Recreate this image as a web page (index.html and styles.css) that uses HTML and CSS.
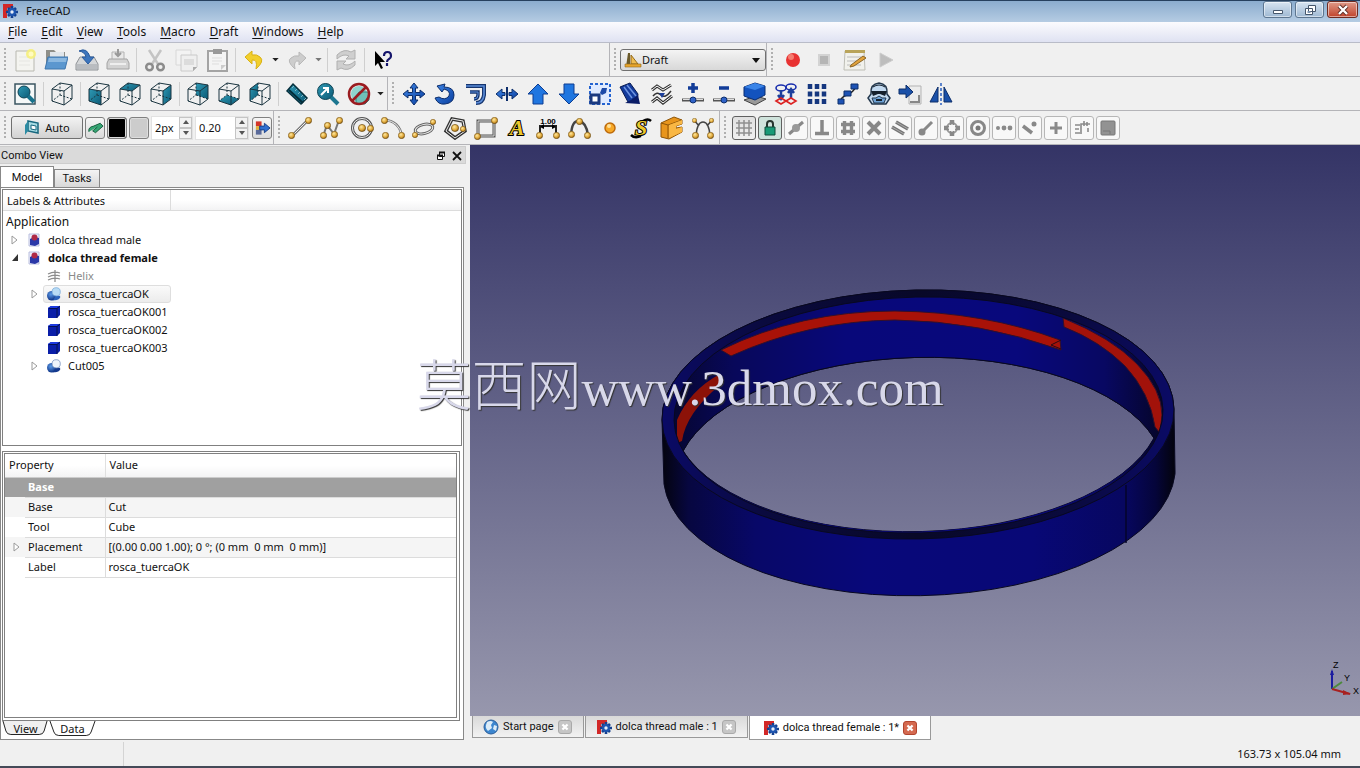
FILE: index.html
```html
<!DOCTYPE html>
<html lang="en">
<head>
<meta charset="utf-8">
<title>FreeCAD</title>
<link rel="stylesheet" href="styles.css">
</head>
<body>
<svg class="defs" aria-hidden="true">
  <defs>
    <linearGradient id="teal" x1="0" y1="0" x2="1" y2="1"><stop offset="0" stop-color="#2f9ab5"/><stop offset="1" stop-color="#0b5a76"/></linearGradient>
    <linearGradient id="blue" x1="0" y1="0" x2="1" y2="1"><stop offset="0" stop-color="#3f86e6"/><stop offset="1" stop-color="#0a3fa0"/></linearGradient>
    <radialGradient id="ball" cx=".4" cy=".35" r=".7"><stop offset="0" stop-color="#ffe9a0"/><stop offset=".6" stop-color="#e0a83a"/><stop offset="1" stop-color="#8a5c10"/></radialGradient>
    <radialGradient id="sphere" cx=".4" cy=".35" r=".7"><stop offset="0" stop-color="#5b9be8"/><stop offset="1" stop-color="#06287c"/></radialGradient>
    <symbol id="fc" viewBox="0 0 16 16"><path d="M1 1h10v4H5v2h4v3H5v5H1z" fill="#d22828"/><g transform="translate(10 9)"><g stroke="#14408f" stroke-width="2.6"><path d="M0-6V6M-6 0H6M-4-4 4 4M-4 4 4-4"/></g><circle r="3.9" fill="#1d55b0"/><circle r="1.7" fill="#e8eef8"/></g></symbol>
    <symbol id="wire" viewBox="0 0 24 24"><g fill="none" stroke="#1b3540" stroke-width="1"><path d="M2 7 14 9V23L2 19zM2 7 10 1 22 3 14 9M22 3V17L14 23"/><path d="M10 1V13L2 19M10 13 22 17" stroke-dasharray="2 1.5"/></g></symbol>
    <symbol id="b" viewBox="0 0 6 6"><circle cx="3" cy="3" r="2.7" fill="url(#ball)" stroke="#6b4a10" stroke-width=".5"/></symbol>
    <symbol id="doc" viewBox="0 0 14 14"><path d="M2 1h10v12H2z" fill="#eef0fa" stroke="#b9bede"/><path d="M3 6l4-2 5 1v6l-4 2-5-1z" fill="#2b38a8"/><circle cx="7.500" cy="4.500" r="3" fill="#b02a46"/></symbol>
    <symbol id="box" viewBox="0 0 14 14"><path d="M1 3 4 1h9v9l-3 3H1z" fill="#0a1ea8"/><path d="M1 3 4 1h9l-3 2z" fill="#1c3ae0"/><path d="M2 3.500h8V13M10 3.500 13 1" fill="none" stroke="#04104f"/></symbol>
    <symbol id="cut" viewBox="0 0 16 16"><circle cx="5.500" cy="10" r="5.500" fill="url(#sphere)"/><path d="M10 10h5v2q-2 4-8 3z" fill="#14398e"/><circle cx="10.500" cy="5.500" r="4.700" fill="#eef4fb" stroke="#6a87b8" stroke-width=".8"/></symbol>
    <symbol id="cutsel" viewBox="0 0 16 16"><circle cx="5.500" cy="10" r="5.500" fill="url(#sphere)"/><path d="M10 10h5v2q-2 4-8 3z" fill="#2c63bb"/><circle cx="10.500" cy="5.500" r="4.700" fill="#b9dcf5" stroke="#6fa5d8" stroke-width=".8"/></symbol>
    <symbol id="exp" viewBox="0 0 8 10"><path d="M1 1 6 5 1 9z" fill="#fff" stroke="#9a9a9a"/></symbol>
    <symbol id="x" viewBox="0 0 14 14"><path d="M4 4 10 10M10 4 4 10" stroke="#fff" stroke-width="2.600"/></symbol>
  </defs>
</svg>

<div class="window">
  <header class="titlebar">
    <svg class="i16"><use href="#fc"/></svg>
    <span class="title">FreeCAD</span>
    <div class="winbtns">
      <button class="winbtn" aria-label="Minimize"><svg viewBox="0 0 14 12"><path d="M2.500 6.500h9v3h-9z" fill="#fff" stroke="#45566b"/></svg></button>
      <button class="winbtn" aria-label="Restore"><svg viewBox="0 0 14 12"><path d="M5.500 1.500h7v6h-7zM2.500 4.500h7v6h-7z" fill="#fff" stroke="#45566b"/><path d="M4.500 7h3v2h-3z" fill="#7c93ae"/></svg></button>
      <button class="winbtn close" aria-label="Close"><svg viewBox="0 0 14 12"><path d="M3 2 11 10M11 2 3 10" stroke="#5b2a22" stroke-width="4"/><path d="M3 2 11 10M11 2 3 10" stroke="#fff" stroke-width="2.400"/></svg></button>
    </div>
  </header>

  <nav class="menubar">
    <button><u>F</u>ile</button><button><u>E</u>dit</button><button><u>V</u>iew</button><button><u>T</u>ools</button><button><u>M</u>acro</button><button><u>D</u>raft</button><button><u>W</u>indows</button><button><u>H</u>elp</button>
  </nav>

  <div class="row">
    <div class="bar grow">
      <i class="grip"></i>
      <button class="tb" aria-label="New"><svg viewBox="0 0 24 24"><path d="M3 3h18v20H3z" fill="#f4f4f0" stroke="#b8b8b0"/><path d="M6 9h10M6 13h11M6 17h11" stroke="#e6e6e2"/><circle cx="18" cy="6" r="5" fill="#f6f07a" opacity=".9"/><circle cx="18" cy="6" r="2.500" fill="#fffbc0"/></svg></button>
      <button class="tb" aria-label="Open"><svg viewBox="0 0 24 24"><path d="M2 2h8l2 2h9v16H2z" fill="#8e8e88"/><path d="M6 4h14v10H6z" fill="#dfe5ea"/><path d="M4 9h20l-3 12H1z" fill="#5b97cf" stroke="#3f76ad"/><path d="M5 10h18l-1 4H4z" fill="#8bb8e0"/></svg></button>
      <button class="tb" aria-label="Save"><svg viewBox="0 0 24 24"><path d="M5 9h14l4 7v6H1v-6z" fill="#d4d6d8" stroke="#8e9296"/><path d="M2 16h20v5H2z" fill="#b9bcc0"/><path d="M4 3q8-4 11 6h4l-6 7-6-7h4q-1-5-7-6z" fill="#3c75bd" stroke="#2a5a9c"/></svg></button>
      <button class="tb" aria-label="Print"><svg viewBox="0 0 24 24"><path d="M6 4h12v8H6z" fill="#e9e9e9" stroke="#b2b2b2"/><path d="M12 1v6m-3-2 3 3 3-3" stroke="#999" stroke-width="2" fill="none"/><path d="M3 11h18l2 4v6H1v-6z" fill="#d2d2d2" stroke="#a2a2a2"/><path d="M4 16h16" stroke="#eee" stroke-width="2"/></svg></button>
      <i class="sep"></i>
      <button class="tb" aria-label="Cut"><svg viewBox="0 0 24 24" fill="none"><path d="M6 2 15 16M18 2 9 16" stroke="#c4c4c4" stroke-width="2.500"/><circle cx="6.500" cy="19" r="3.300" stroke="#8c8c8c" stroke-width="2.500"/><circle cx="17.500" cy="19" r="3.300" stroke="#8c8c8c" stroke-width="2.500"/></svg></button>
      <button class="tb" aria-label="Copy"><svg viewBox="0 0 24 24"><path d="M2 2h15v15H2z" fill="#f3f3f3" stroke="#d8d8d8"/><path d="M7 7h16v12l-4 4H7z" fill="#efefef" stroke="#cacaca"/><path d="M10 11h10v6H10z" fill="#dcdcdc"/><path d="M19 23v-4h4z" fill="#aaa"/></svg></button>
      <button class="tb" aria-label="Paste"><svg viewBox="0 0 24 24"><path d="M3 3h19v20H3z" fill="#f4f4f4" stroke="#a4a4a4" stroke-width="2"/><path d="M8 1h9v5H8z" fill="#999"/><path d="M7 10h10M7 13h10M7 16h7" stroke="#ddd"/><path d="M16 22v-5h5z" fill="#ccc"/></svg></button>
      <i class="sep"></i>
      <button class="tb" aria-label="Undo"><svg viewBox="0 0 24 24"><path d="M10 3 3 9l7 7v-4q6-1 4 9 9-8 4-12-3-3-8-2z" fill="#f2cf2c" stroke="#d9b114"/></svg></button>
      <button class="dd" aria-label="Undo list"><svg viewBox="0 0 8 5"><path d="M0 0h8L4 4z" fill="#222"/></svg></button>
      <button class="tb" aria-label="Redo"><svg viewBox="0 0 24 24"><path d="M14 4 21 10l-7 7v-4q-6-1-4 8-9-8-4-11 3-3 8-2z" fill="#cdcdcd" stroke="#b8b8b8"/></svg></button>
      <button class="dd" aria-label="Redo list"><svg viewBox="0 0 8 5"><path d="M0 0h8L4 4z" fill="#777"/></svg></button>
      <i class="sep"></i>
      <button class="tb" aria-label="Refresh"><svg viewBox="0 0 24 24"><g fill="#cfcfcf" stroke="#b0b0b0"><path d="M3 11V7q7-7 14-3l4-2v9h-9l3-3Q9 5 3 11z"/><path d="M21 13v4q-7 7-14 3l-4 2v-9h9l-3 3q6 3 12-3z"/></g></svg></button>
      <i class="sep"></i>
      <button class="tb" aria-label="What's this"><svg viewBox="0 0 24 24"><path d="M4 3v15l3-3 3 6 2-1-3-6h5z" fill="#000"/><path d="M13 8q0-4 3.500-4T20 8q0 2-2 3t-2 3m0 1v3" fill="none" stroke="#15156b" stroke-width="2.200"/></svg></button>
    </div>
    <div class="bar combo-bar">
      <i class="grip"></i>
      <label class="combo"><svg viewBox="0 0 18 18" class="combo-ic"><path d="M4 2h2v14H2z" fill="#6b5a2a"/><path d="M7 4v9h7z" fill="#f0bd50" stroke="#946b1c"/><path d="M1 13h16v3H1z" fill="#e8a52c" stroke="#8d661c" stroke-width=".6"/></svg>
        <select aria-label="Workbench"><option>Draft</option></select>
        <svg viewBox="0 0 8 5" class="combo-arrow"><path d="M0 0h8L4 5z" fill="#111"/></svg></label>
    </div>
    <div class="bar last">
      <i class="grip"></i>
      <button class="tb" aria-label="Record"><svg viewBox="0 0 24 24"><circle cx="12" cy="12" r="7" fill="#e83232"/><circle cx="10" cy="9" r="3" fill="#f57c70"/></svg></button>
      <button class="tb" aria-label="Stop"><svg viewBox="0 0 24 24"><path d="M6 6h12v12H6z" fill="#d3d3d3"/><path d="M8 8h8v8H8z" fill="#b5b5b5"/></svg></button>
      <button class="tb" aria-label="Macros"><svg viewBox="0 0 24 24"><path d="M2 3h19l1 19H1z" fill="#f1f1ec" stroke="#bdbdb5"/><path d="M2 2h20v3H2z" fill="#b9a45a"/><path d="M4 9h14M4 13h14M4 17h14" stroke="#bbb"/><path d="M8 17 20 8l3 2-12 8-4 1z" fill="#e2a33c" stroke="#8a6424"/></svg></button>
      <button class="tb" aria-label="Run"><svg viewBox="0 0 24 24"><path d="M6 5 19 12 6 19z" fill="#bdbdbd" stroke="#ccc"/></svg></button>
    </div>
  </div>

  <div class="row">
    <div class="bar">
      <i class="grip"></i>
      <button class="tb" aria-label="Fit all"><svg viewBox="0 0 24 24"><path d="M2 2h20v20H2z" fill="#f5f8f8" stroke="#3b5661" stroke-width="1.500"/><circle cx="11" cy="10" r="6" fill="url(#teal)" stroke="#0c4253"/><path d="M15 14 21 20" stroke="#17728c" stroke-width="4"/></svg></button>
      <i class="sep"></i>
      <button class="tb" aria-label="Axonometric"><svg><use href="#wire"/></svg></button>
      <i class="sep"></i>
      <button class="tb" aria-label="Front"><svg viewBox="0 0 24 24"><path d="M2 7 14 9V23L2 19z" fill="url(#teal)"/><use href="#wire"/></svg></button>
      <button class="tb" aria-label="Top"><svg viewBox="0 0 24 24"><path d="M2 7 10 1 22 3 14 9z" fill="url(#teal)"/><use href="#wire"/></svg></button>
      <button class="tb" aria-label="Right"><svg viewBox="0 0 24 24"><path d="M14 9 22 3V17L14 23z" fill="url(#teal)"/><use href="#wire"/></svg></button>
      <i class="sep"></i>
      <button class="tb" aria-label="Rear"><svg viewBox="0 0 24 24"><path d="M10 1 22 3V17L10 13z" fill="url(#teal)"/><use href="#wire"/></svg></button>
      <button class="tb" aria-label="Bottom"><svg viewBox="0 0 24 24"><path d="M2 19 10 13 22 17 14 23z" fill="url(#teal)"/><use href="#wire"/></svg></button>
      <button class="tb" aria-label="Left"><svg viewBox="0 0 24 24"><path d="M2 7 10 1V13L2 19z" fill="url(#teal)"/><use href="#wire"/></svg></button>
      <i class="sep"></i>
      <button class="tb" aria-label="Measure"><svg viewBox="0 0 24 24"><path d="M8 2 22 16 16 22 2 9z" fill="url(#teal)" stroke="#06303d" stroke-width="1.500"/><path d="M4 8 18 21" stroke="#042c38" stroke-width="2"/><path d="M9 4 7 6m5 1-2 2m5 1-2 2m5 1-2 2m5 1-2 2" stroke="#7fb8c6"/></svg></button>
      <button class="tb" aria-label="Zoom"><svg viewBox="0 0 24 24"><circle cx="9.500" cy="9.500" r="8" fill="url(#teal)" stroke="#0c4253"/><path d="M15 15 22 22" stroke="#1c7690" stroke-width="4"/><path d="M5 13 12 6M7 6h5v5" stroke="#fff" stroke-width="2" fill="none"/></svg></button>
      <button class="tb" aria-label="Draw style"><svg viewBox="0 0 24 24"><circle cx="12" cy="12" r="8" fill="#8fd4ce"/><path d="M12 10h10v8l-4 4h-9v-8z" fill="#6fc0b8" stroke="#357e7b"/><circle cx="12" cy="12" r="10" fill="none" stroke="#9a1c20" stroke-width="2.500"/><path d="M5 19 19 5" stroke="#9a1c20" stroke-width="2.500"/></svg></button>
      <button class="dd" aria-label="Draw styles"><svg viewBox="0 0 8 5"><path d="M0 0h8L4 4z" fill="#222"/></svg></button>
    </div>
    <div class="bar last">
      <i class="grip"></i>
      <button class="tb" aria-label="Move"><svg viewBox="0 0 24 24"><path d="M12 1l4 5h-2.500v4.500H18V8l5 4-5 4v-2.500h-4.500V18H16l-4 5-4-5h2.500v-4.500H6V16l-5-4 5-4v2.500h4.500V6H8z" fill="url(#blue)" stroke="#0d2e6b"/></svg></button>
      <button class="tb" aria-label="Rotate"><svg viewBox="0 0 24 24"><path d="M12 2 4 4 9 10 11 7q7 2 5 7-4 5-10 1l-4 1q3 7 10 6 9-1 9-9Q21 5 11 5z" fill="url(#blue)" stroke="#0d2e6b"/></svg></button>
      <button class="tb" aria-label="Offset"><svg viewBox="0 0 24 24" fill="none"><path d="M2 4h18v9q-1 8-8 8" stroke="#16356f" stroke-width="4"/><path d="M2 4h18v9q-1 8-8 8" stroke="#5b8cd8" stroke-width="1.600"/><path d="M6 10h8v3q0 4-4 4" stroke="#16356f" stroke-width="3.400"/><path d="M6 10h8v3q0 4-4 4" stroke="#5b8cd8"/></svg></button>
      <button class="tb" aria-label="Trimex"><svg viewBox="0 0 24 24"><path d="M1 12l6-5v3.500h3v3H7V17zM23 12l-6-5v3.500h-3v3h3V17z" fill="url(#blue)" stroke="#0d2e6b"/><path d="M12 5v14" stroke="#0d2e6b" stroke-width="2"/></svg></button>
      <button class="tb" aria-label="Upgrade"><svg viewBox="0 0 24 24"><path d="M12 2 22 12h-5v10H7V12H2z" fill="#2076e0" stroke="#0d3d92"/></svg></button>
      <button class="tb" aria-label="Downgrade"><svg viewBox="0 0 24 24"><path d="M12 22 22 12h-5V2H7v10H2z" fill="#2076e0" stroke="#0d3d92"/></svg></button>
      <button class="tb" aria-label="Scale"><svg viewBox="0 0 24 24"><path d="M2 2h20v20H2z" fill="#dfeaff" stroke="#2463d0" stroke-width="2" stroke-dasharray="3 2"/><path d="M3 13h8v8H3z" fill="#fff" stroke="#1b3a80" stroke-width="3"/><path d="M12 11l2-5h5l-1 5-4 2z" fill="#1d4aa8"/></svg></button>
      <button class="tb" aria-label="Edit"><svg viewBox="0 0 24 24"><path d="M1 5 11 1l8 11-1 7-9 1z" fill="#123a9c" stroke="#081a50"/><path d="M5 5 13 16M8 3 17 14" stroke="#6d93e0" stroke-width="1.500"/><path d="M6 21l15 1-2-9-7 5z" fill="#0a1c66"/></svg></button>
      <button class="tb" aria-label="Wire to spline"><svg viewBox="0 0 24 24" fill="none"><path d="M2 8 7 4l6 4 8-5M2 20l5-4 6 5 9-7" stroke="#333" stroke-width="3"/><path d="M2 8 7 4l6 4 8-5M2 20l5-4 6 5 9-7" stroke="#fff"/><path d="M3 14q4-5 8-1t10-4" stroke="#333" stroke-width="1.500"/><path d="M9 11h6l-3 5z" fill="#1c3f9c"/></svg></button>
      <button class="tb" aria-label="Add point"><svg viewBox="0 0 24 24"><path d="M12 1v10M7 6h10" stroke="#123c98" stroke-width="3.500"/><path d="M1 18h22" stroke="#555" stroke-width="3"/><path d="M2 17.500h20" stroke="#ddd"/><circle cx="12" cy="18" r="3" fill="#2f62c8" stroke="#0d2e6b"/></svg></button>
      <button class="tb" aria-label="Remove point"><svg viewBox="0 0 24 24"><path d="M7 6h10" stroke="#123c98" stroke-width="3.500"/><path d="M1 18h22" stroke="#555" stroke-width="3"/><path d="M2 17.500h20" stroke="#ddd"/><circle cx="12" cy="18" r="3" fill="#2f62c8" stroke="#0d2e6b"/></svg></button>
      <button class="tb" aria-label="Shape 2D view"><svg viewBox="0 0 24 24"><path d="M1 18 13 14 23 17 12 23z" fill="#999" stroke="#444"/><path d="M1 5 12 1 22 4V13L12 18 1 14z" fill="#1353be" stroke="#0a2c70"/><path d="M1 5 12 1 22 4 12 8z" fill="#3a84e8"/></svg></button>
      <button class="tb" aria-label="Draft to sketch"><svg viewBox="0 0 24 24" fill="none"><g stroke="#1a2fae" stroke-width="1.600"><ellipse cx="7" cy="6" rx="5" ry="3"/><ellipse cx="17" cy="5" rx="5" ry="3"/></g><path d="M7 8v8M17 16V8M4 13l3 4 3-4M14 11l3-4 3 4" stroke="#1c3f9c" stroke-width="2.500"/><path d="M2 19l5-3 5 3 5-3 5 3-5 3-5-3-5 3z" stroke="#dc2222" stroke-width="1.600"/></svg></button>
      <button class="tb" aria-label="Array"><svg viewBox="0 0 24 24"><path d="M5 2v20M12 2v20M19 2v20" stroke="#15377f" stroke-width="4.500" stroke-dasharray="5 2.500"/></svg></button>
      <button class="tb" aria-label="Path array"><svg viewBox="0 0 24 24"><path d="M4 20q1-5 7-7t9-9" fill="none" stroke="#222" stroke-width="1.500"/><path d="M15 2h7v5h-7zM8 9h7v5H8zM2 17h6v5H2z" fill="#1d52b4" stroke="#0d2e6b"/></svg></button>
      <button class="tb" aria-label="Clone"><svg viewBox="0 0 24 24"><path d="M4 12q-1-10 8-11 9 1 8 11l3 4-4 6H5l-4-6z" fill="#c3daf0" stroke="#23374c" stroke-width="1.500"/><path d="M4 9h16l-2 5-5-2h-2l-5 2z" fill="#15202c"/><path d="M6 5q6-4 12 0" stroke="#15202c" fill="none"/><path d="M5 16h4l3-2 3 2h4l-2 5H7z" fill="#6fa3d6" stroke="#23374c"/><path d="M9 18h6" stroke="#15202c" stroke-width="2"/></svg></button>
      <button class="tb" aria-label="Drawing"><svg viewBox="0 0 24 24"><path d="M11 4h12v18H11z" fill="#ececec" stroke="#b3b3b3"/><path d="M12 20h9v-7" fill="none" stroke="#888" stroke-width="2"/><path d="M1 7h7V3l7 7-7 6v-4H1z" fill="#1a50a8" stroke="#0d2e6b"/></svg></button>
      <button class="tb" aria-label="Mirror"><svg viewBox="0 0 24 24"><path d="M9 5V20H1zM15 5V20h8z" fill="#1a50a8" stroke="#0d2e6b"/><path d="M12 1v22" stroke="#2a5fc0" stroke-width="1.500" stroke-dasharray="3 2"/></svg></button>
    </div>
  </div>

  <div class="row">
    <div class="bar style-bar">
      <i class="grip"></i>
      <button class="auto"><svg viewBox="0 0 16 16"><path d="M4 1 14 3V13L4 11z" fill="#a7dbe3" stroke="#17677e" stroke-width="1.500"/><path d="M4 1 1 5v10l3-4z" fill="#2c8ca4"/><path d="M7 5l5 1v4L7 9z" fill="#fff" stroke="#17677e"/></svg>Auto</button>
      <button class="sq" aria-label="Construction"><svg viewBox="0 0 18 16"><path d="M2 12q-1-5 5-6l7-3 3 3-8 7-3-2 5-4" fill="#35a573" stroke="#145a3b"/></svg></button>
      <button class="sq line" aria-label="Line color"></button>
      <button class="sq face" aria-label="Face color"></button>
      <div class="spin w1"><input aria-label="Line width" value="2px"><div><button aria-label="Wider"><svg viewBox="0 0 6 4"><path d="M0 4h6L3 0z"/></svg></button><button aria-label="Thinner"><svg viewBox="0 0 6 4"><path d="M0 0h6L3 4z"/></svg></button></div></div>
      <div class="spin w2"><input aria-label="Text size" value="0.20"><div><button aria-label="Larger"><svg viewBox="0 0 6 4"><path d="M0 4h6L3 0z"/></svg></button><button aria-label="Smaller"><svg viewBox="0 0 6 4"><path d="M0 0h6L3 4z"/></svg></button></div></div>
      <button class="sq" aria-label="Apply"><svg viewBox="0 0 18 16"><path d="M2 1h6v5H2z" fill="#d3352a"/><path d="M2 6h6v4H2z" fill="#e2b13a"/><path d="M2 10h6v5H2z" fill="#5a6a9a"/><path d="M6 6h5V3l6 5-6 5v-3H6z" fill="#2f6fd0" stroke="#173f88"/></svg></button>
    </div>
    <div class="bar">
      <i class="grip"></i>
      <button class="tb" aria-label="Line"><svg viewBox="0 0 24 24"><path d="M4 20 20 4" stroke="#777" stroke-width="3"/><path d="M4 20 20 4" stroke="#eee"/><use href="#b" x="0" y="16" width="7" height="7"/><use href="#b" x="17" y="1" width="7" height="7"/></svg></button>
      <button class="tb" aria-label="Wire"><svg viewBox="0 0 24 24"><path d="M4 20 8 9l7 9 5-14" fill="none" stroke="#777" stroke-width="2"/><use href="#b" x="1" y="16" width="7" height="7"/><use href="#b" x="5" y="6" width="7" height="7"/><use href="#b" x="12" y="15" width="7" height="7"/><use href="#b" x="17" y="1" width="7" height="7"/></svg></button>
      <button class="tb" aria-label="Circle"><svg viewBox="0 0 24 24"><circle cx="12" cy="12" r="9.500" fill="none" stroke="#555" stroke-width="3"/><circle cx="12" cy="12" r="9.500" fill="none" stroke="#eee"/><use href="#b" x="8" y="8" width="8" height="8"/><use href="#b" x="17" y="9" width="7" height="7"/></svg></button>
      <button class="tb" aria-label="Arc"><svg viewBox="0 0 24 24"><path d="M4 4q14 1 17 16" fill="none" stroke="#777" stroke-width="2.500"/><path d="M4 4q14 1 17 16" fill="none" stroke="#eee"/><use href="#b" x="0" y="1" width="7" height="7"/><use href="#b" x="1" y="16" width="7" height="7"/><use href="#b" x="17" y="16" width="7" height="7"/></svg></button>
      <button class="tb" aria-label="Ellipse"><svg viewBox="0 0 24 24"><ellipse cx="12" cy="13" rx="9" ry="4.500" transform="rotate(-14 12 13)" fill="none" stroke="#666" stroke-width="3"/><ellipse cx="12" cy="13" rx="9" ry="4.500" transform="rotate(-14 12 13)" fill="none" stroke="#eee"/><use href="#b" x="0" y="16" width="6" height="6"/><use href="#b" x="18" y="3" width="6" height="6"/></svg></button>
      <button class="tb" aria-label="Polygon"><svg viewBox="0 0 24 24"><path d="M9 3 20 5l2 10-10 7-9-7z" fill="none" stroke="#333" stroke-width="3.500"/><path d="M9 3 20 5l2 10-10 7-9-7z" fill="none" stroke="#eee"/><use href="#b" x="8" y="8" width="8" height="8"/><use href="#b" x="17" y="10" width="6" height="6"/></svg></button>
      <button class="tb" aria-label="Rectangle"><svg viewBox="0 0 24 24"><path d="M4 5h16v15H4z" fill="#f2f2f2" stroke="#555" stroke-width="3"/><path d="M4 5h16v15H4z" fill="none" stroke="#ddd"/><use href="#b" x="0" y="17" width="7" height="7"/><use href="#b" x="17" y="1" width="7" height="7"/></svg></button>
      <button class="tb" aria-label="Text"><svg viewBox="0 0 24 24"><text class="glyph" x="12" y="19">A</text></svg></button>
      <button class="tb" aria-label="Dimension"><svg viewBox="0 0 24 24"><text class="dim" x="12" y="8">1.00</text><path d="M4 20V10h16v10" fill="none" stroke="#222" stroke-width="2"/><path d="M4 11l4-3v5zM20 11l-4-3v5z"/><use href="#b" x="0" y="16" width="7" height="7"/><use href="#b" x="17" y="16" width="7" height="7"/></svg></button>
      <button class="tb" aria-label="BSpline"><svg viewBox="0 0 24 24"><path d="M4 19Q5 4 12 5t9 14" fill="none" stroke="#444" stroke-width="2.500"/><use href="#b" x="1" y="15" width="7" height="7"/><use href="#b" x="9" y="2" width="7" height="7"/><use href="#b" x="17" y="16" width="7" height="7"/></svg></button>
      <button class="tb" aria-label="Point"><svg viewBox="0 0 24 24"><circle cx="12" cy="12" r="5" fill="#f7a928" stroke="#bd6b0c" stroke-width="1.500"/><circle cx="11" cy="10" r="2" fill="#ffe097"/></svg></button>
      <button class="tb" aria-label="Shape string"><svg viewBox="0 0 24 24"><path d="M2 19q4 4 10 1M14 5q5-3 8 0" fill="none" stroke="#000" stroke-width="2.500"/><text class="glyph" x="12" y="19">S</text></svg></button>
      <button class="tb" aria-label="Facebinder"><svg viewBox="0 0 24 24"><path d="M1 7 14 1 22 4V8L16 10V12L22 11V16L9 23 1 21z" fill="#e8951c" stroke="#8d5508"/><path d="M1 7 8 9 22 4M8 9v13" fill="none" stroke="#8d5508"/><path d="M9 9 22 4v4l-6 2v3l6-2v5L9 22z" fill="#f9b744"/></svg></button>
      <button class="tb" aria-label="Bezier"><svg viewBox="0 0 24 24"><path d="M5 20Q6 6 12 6t7 14M3 4 8 10M21 4 16 10" fill="none" stroke="#444" stroke-width="1.500"/><use href="#b" x="1" y="2" width="5" height="5"/><use href="#b" x="18" y="2" width="5" height="5"/><use href="#b" x="1" y="16" width="7" height="7"/><use href="#b" x="16" y="16" width="7" height="7"/></svg></button>
    </div>
    <div class="bar last snaps">
      <i class="grip"></i>
      <button class="snap on" aria-label="Grid"><svg viewBox="0 0 18 18"><path d="M4 1v16M9 1v16M14 1v16M1 4h16M1 9h16M1 14h16" stroke="#909090" stroke-width="1.500"/></svg></button>
      <button class="snap on lock" aria-label="Lock"><svg viewBox="0 0 18 18"><path d="M6 8V5q0-3 3-3t3 3v3" fill="none" stroke="#26352f" stroke-width="2"/><path d="M4 8h10v8H4z" fill="#189a76" stroke="#0e4d3a"/></svg></button>
      <button class="snap" aria-label="Midpoint"><svg viewBox="0 0 18 18"><path d="M2 15 16 3" stroke="#888" stroke-width="3"/><circle cx="9" cy="9" r="4" fill="#999"/></svg></button>
      <button class="snap" aria-label="Perpendicular"><svg viewBox="0 0 18 18"><path d="M9 1v13M2 14.500h14" stroke="#888" stroke-width="3.500"/></svg></button>
      <button class="snap" aria-label="Grid snap"><svg viewBox="0 0 18 18"><path d="M5.500 2v14M12.500 2v14M2 5.500h14M2 12.500h14" stroke="#888" stroke-width="3.400" /></svg></button>
      <button class="snap" aria-label="Intersection"><svg viewBox="0 0 18 18"><path d="M3 3 15 15M15 3 3 15" stroke="#888" stroke-width="4"/></svg></button>
      <button class="snap" aria-label="Parallel"><svg viewBox="0 0 18 18"><path d="M5 3 17 10M1 8l12 7" stroke="#777" stroke-width="3.500"/><path d="M5 3 17 10M1 8l12 7" stroke="#aaa"/></svg></button>
      <button class="snap" aria-label="Endpoint"><svg viewBox="0 0 18 18"><path d="M5 13 15 3" stroke="#888" stroke-width="3"/><circle cx="5" cy="13" r="3.500" fill="#888"/></svg></button>
      <button class="snap" aria-label="Angle"><svg viewBox="0 0 18 18"><circle cx="9" cy="9" r="5" fill="none" stroke="#999" stroke-width="2"/><path d="M9 1v5M9 12v5M1 9h5M12 9h5" stroke="#888" stroke-width="4.500"/><path d="M9 5 13 9 9 13 5 9z" fill="#f5f5f5"/></svg></button>
      <button class="snap" aria-label="Center"><svg viewBox="0 0 18 18"><circle cx="9" cy="9" r="6.500" fill="none" stroke="#888" stroke-width="3"/><circle cx="9" cy="9" r="2.500" fill="#777"/></svg></button>
      <button class="snap" aria-label="Extension"><svg viewBox="0 0 18 18" fill="#8a8a8a"><circle cx="3" cy="9" r="2"/><circle cx="9" cy="9" r="2.400"/><circle cx="15" cy="9" r="2.400"/></svg></button>
      <button class="snap" aria-label="Near"><svg viewBox="0 0 18 18"><path d="M2 7 11 14" stroke="#888" stroke-width="3.500"/><circle cx="13" cy="5" r="2.500" fill="#888"/></svg></button>
      <button class="snap" aria-label="Ortho"><svg viewBox="0 0 18 18"><path d="M9 3v12M3 9h12" stroke="#8a8a8a" stroke-width="3"/></svg></button>
      <button class="snap" aria-label="Special"><svg viewBox="0 0 18 18"><path d="M2 6h5M2 10h4M2 14h5M8 15V5h9M11 2v5M14 3v4M15 9v4" stroke="#8a8a8a" stroke-width="1.600" fill="none"/></svg></button>
      <button class="snap" aria-label="Working plane"><svg viewBox="0 0 18 18"><rect x="2" y="2" width="14" height="14" rx="1" fill="#929292" stroke="#777"/><path d="M4 12h7v3" stroke="#777" fill="none"/></svg></button>
    </div>
  </div>

  <main class="main">
    <aside class="dock">
      <div class="docktitle"><span>Combo View</span>
        <button aria-label="Float"><svg viewBox="0 0 10 10"><path d="M3.500 1.500h5v4h-5zM1.500 4.500h5v4h-5z" fill="#fff" stroke="#111"/><path d="M3 1.500h6M1 4.500h6" stroke="#111" stroke-width="2"/></svg></button>
        <button aria-label="Close panel"><svg viewBox="0 0 10 10"><path d="M1 1 9 9M9 1 1 9" stroke="#111" stroke-width="1.800"/></svg></button>
      </div>
      <div class="tabs"><button class="tab active">Model</button><button class="tab">Tasks</button></div>
      <div class="pane">
        <section class="tree">
          <div class="treehead"><span>Labels &amp; Attributes</span></div>
          <ul>
            <li class="root">Application</li>
            <li><svg class="tw"><use href="#exp"/></svg><svg class="ic"><use href="#doc"/></svg>dolca thread male</li>
            <li class="bold"><svg class="tw" viewBox="0 0 8 10"><path d="M7 1v7H1z" fill="#333"/></svg><svg class="ic"><use href="#doc"/></svg>dolca thread female</li>
            <li class="sub dim-row"><i class="tw"></i><svg class="ic" viewBox="0 0 14 14"><path d="M1 5q6-3 12-1M1 8q6-3 12-1M1 11q6-3 12-1M8 1v12" fill="none" stroke="#8c8c8c" stroke-width="1.300"/></svg>Helix</li>
            <li class="sub"><svg class="tw"><use href="#exp"/></svg><span class="sel"><svg class="ic"><use href="#cutsel"/></svg>rosca_tuercaOK</span></li>
            <li class="sub"><i class="tw"></i><svg class="ic"><use href="#box"/></svg>rosca_tuercaOK001</li>
            <li class="sub"><i class="tw"></i><svg class="ic"><use href="#box"/></svg>rosca_tuercaOK002</li>
            <li class="sub"><i class="tw"></i><svg class="ic"><use href="#box"/></svg>rosca_tuercaOK003</li>
            <li class="sub"><svg class="tw"><use href="#exp"/></svg><svg class="ic"><use href="#cut"/></svg>Cut005</li>
          </ul>
        </section>
        <section class="props">
          <div class="propframe">
            <table>
              <colgroup><col class="c1"><col class="c2"><col></colgroup>
              <thead><tr><th colspan="2">Property</th><th>Value</th></tr></thead>
              <tbody>
                <tr class="group"><td class="g"></td><td colspan="2">Base</td></tr>
                <tr class="alt"><td class="g"></td><td>Base</td><td>Cut</td></tr>
                <tr><td class="g"></td><td>Tool</td><td>Cube</td></tr>
                <tr class="alt"><td class="g"><svg class="tw"><use href="#exp"/></svg></td><td>Placement</td><td>[(0.00 0.00 1.00); 0 °; (0 mm&nbsp; 0 mm&nbsp; 0 mm)]</td></tr>
                <tr><td class="g"></td><td>Label</td><td>rosca_tuercaOK</td></tr>
              </tbody>
            </table>
          </div>
        </section>
        <div class="btabs">
          <button class="btab"><svg viewBox="0 0 48 16" preserveAspectRatio="none"><path d="M1 0 4 10Q5 13.500 9 13.500H38Q42 13.500 43 10L46 0" fill="#f0f0f0" stroke="#222"/></svg><span>View</span></button>
          <button class="btab"><svg viewBox="0 0 48 16" preserveAspectRatio="none"><path d="M1 0 5 11Q6 14.500 10 14.500H38Q42 14.500 43 11L47 0" fill="#fff" stroke="#222"/></svg><span>Data</span></button>
        </div>
      </div>
    </aside>

    <section class="work">
      <div class="view">
        <svg class="model" viewBox="470 145 890 571" preserveAspectRatio="xMidYMid slice" role="img" aria-label="dolca thread female">
          <defs>
            <linearGradient id="wall" gradientUnits="userSpaceOnUse" x1="663" y1="0" x2="1176" y2="0"><stop offset="0" stop-color="#040410"/><stop offset=".05" stop-color="#070740"/><stop offset=".18" stop-color="#080868"/><stop offset=".4" stop-color="#08087a"/><stop offset=".72" stop-color="#080876"/><stop offset=".9" stop-color="#070760"/><stop offset=".96" stop-color="#05053a"/><stop offset="1" stop-color="#03030a"/></linearGradient>
            <linearGradient id="inner" gradientUnits="userSpaceOnUse" x1="675" y1="0" x2="1163" y2="0"><stop offset="0" stop-color="#060632"/><stop offset=".12" stop-color="#08085a"/><stop offset=".35" stop-color="#08087a"/><stop offset=".7" stop-color="#08087c"/><stop offset=".88" stop-color="#080862"/><stop offset="1" stop-color="#050528"/></linearGradient>
            <linearGradient id="rim" gradientUnits="userSpaceOnUse" x1="662" y1="0" x2="1175" y2="0"><stop offset="0" stop-color="#0a0a66"/><stop offset=".2" stop-color="#0a0a3e"/><stop offset=".5" stop-color="#080828"/><stop offset=".8" stop-color="#0a0a3e"/><stop offset="1" stop-color="#0a0a66"/></linearGradient>
          </defs>
          <path d="M662 420A256 124.500-1.300 0 1 1174 409L1175 470A256 124-1.300 0 1 1175 474A256 124-1.300 0 1 664 484ZM683 451A245 120-1.300 0 1 1154 438A245 120-1.300 0 1 683 451Z" fill="url(#wall)" fill-rule="evenodd" stroke="#080820"/>
          <path d="M674 420.500A244.500 118-1.300 0 1 1163 409.500A244.500 118-1.300 0 1 674 420.500ZM683 451A245 120-1.300 0 1 1154 438A245 120-1.300 0 1 683 451Z" fill="url(#inner)" fill-rule="evenodd"/>
          <path d="M721 350Q800 311 895 311Q985 312 1060 340L1061 350Q980 321 895 320Q808 321 731 356Z" fill="#a81208" stroke="#33102a"/>
          <path d="M1061 340 1051 345 1061 349" fill="none" stroke="#2b0a12"/>
          <path d="M1063 318Q1112 338 1137 364Q1162 390 1162 415L1160 433 1155 427Q1150 393 1125 366Q1100 341 1064 327Z" fill="#a2120a" stroke="#33102a"/>
          <path d="M720 374Q690 390 677 420V443L682 441Q686 413 720 385Z" fill="#8c1208"/>
          <path d="M662 420A256 124.500-1.300 0 1 1174 409A256 124.500-1.300 0 1 662 420ZM674 420.500A244.500 118-1.300 0 1 1163 409.500A244.500 118-1.300 0 1 674 420.500Z" fill="url(#rim)" fill-rule="evenodd" stroke="#080820"/>
          <path d="M683 451A245 120-1.300 0 1 1154 438" fill="none" stroke="#080820"/>
          <path d="M1126 485V543" stroke="#04042a" stroke-width="1.500"/>
        </svg>
        <svg class="axes" viewBox="0 0 32 38"><path d="M4 29V11" stroke="#1c1ca0" stroke-width="2"/><path d="M2 15 4 9 6 15z" fill="#1c1ca0"/><path d="M4 29 14 22" stroke="#4c8a3c" stroke-width="2"/><path d="M4 29 22 34" stroke="#a82020" stroke-width="2"/><path d="M15 30 23 34 15 35z" fill="#a82020"/><text x="5" y="8">Z</text><text x="16" y="21">Y</text><text x="25" y="34">X</text></svg>
      </div>
      <div class="mdi">
        <button class="doc"><svg class="i16" viewBox="0 0 16 16"><circle cx="8" cy="8" r="7" fill="#3c86cf" stroke="#2b5e9a"/><path d="M4 3q4-2 6 0L8 6 9 9 5 12Q2 9 3 6zM11 6l3 1-1 5-3-2z" fill="#dcecf8"/></svg>Start page<svg class="cl"><use href="#x"/></svg></button>
        <button class="doc"><svg class="i16"><use href="#fc"/></svg>dolca thread male : 1<svg class="cl"><use href="#x"/></svg></button>
        <button class="doc cur"><svg class="i16"><use href="#fc"/></svg>dolca thread female : 1*<svg class="cl"><use href="#x"/></svg></button>
      </div>
    </section>
  </main>

  <footer class="status"><i></i><span>163.73 x 105.04 mm</span></footer>
</div>
<div class="mark"><span class="han">莫西网</span>www.3dmox.com</div>
</body>
</html>
```
FILE: styles.css
```css
* { box-sizing: border-box; }
body { margin: 0; font: 11px/16px "Noto Sans", "Open Sans", sans-serif; color: #111; background: #f0f0f0; overflow: hidden; }
button, input, select { font: inherit; color: inherit; margin: 0; padding: 0; border: 0; background: none; }
svg { display: block; flex: none; }
.defs { position: absolute; width: 0; height: 0; }
.i16 { width: 16px; height: 16px; }
.window { height: 100vh; display: flex; flex-direction: column; }

.titlebar { height: 22px; flex: none; display: flex; align-items: center; padding: 0 2px 2px; background: linear-gradient(#8bacce, #b5cce3); border-top: 1px solid #26405e; }
.title { margin-left: 8px; }
.winbtns { margin-left: auto; display: flex; gap: 3px; align-self: flex-start; }
.winbtn { width: 29px; height: 17px; display: grid; place-items: center; border: 1px solid #5d7690; border-radius: 3px; background: linear-gradient(#d7e4f1, #9fb9d3); box-shadow: inset 0 0 0 1px #ffffff80; }
.winbtn svg { width: 14px; height: 12px; }
.winbtn.close { width: 31px; background: linear-gradient(#e09a88, #c0432c); border-color: #6e2a20; }

.menubar { height: 21px; flex: none; display: flex; padding-left: 1px; background: linear-gradient(#fbfbfe, #dfe2f2); border-bottom: 1px solid #b9bcc8; font-size: 12px; }
.menubar button { padding: 0 7px; line-height: 20px; }
.menubar u { text-underline-offset: 2px; }

.row { height: 34px; flex: none; display: flex; border-bottom: 1px solid #b4b4b8; background: #f0f0f0; }
.bar { display: flex; align-items: center; border-right: 1px solid #b4b4b8; padding-right: 1px; }
.bar.last { border-right: 0; flex: 1; }
.bar.grow { width: 610px; }
.bar.combo-bar { padding-right: 0; }
.grip { width: 10px; height: 24px; flex: none; background: repeating-linear-gradient(#b0b0b0 0 2px, transparent 2px 4px) 4px 0 / 2px 100% no-repeat; }
.bar:first-child .grip { width: 9px; }
.sep { width: 6px; height: 24px; flex: none; background: linear-gradient(#cfcfcf, #cfcfcf) 3px 0 / 1px 100% no-repeat; }
.tb { width: 31px; height: 30px; display: grid; place-items: center; flex: none; }
.tb svg { width: 24px; height: 24px; }
.dd { width: 12px; height: 30px; display: grid; place-items: center; }
.dd svg { width: 7px; height: 4px; }
.glyph { font: italic bold 22px "Liberation Serif", serif; text-anchor: middle; fill: #ecc92c; stroke: #000; stroke-width: 2px; paint-order: stroke; }
.dim { font: bold 8px "Liberation Sans", sans-serif; text-anchor: middle; }

.combo { position: relative; }
.combo select { width: 146px; height: 22px; padding-left: 21px; appearance: none; border: 1px solid #707070; border-radius: 3px; background: linear-gradient(#f4f4f4, #d8d8d8); }
.combo-ic { position: absolute; left: 4px; top: 2px; width: 18px; height: 18px; }
.combo-arrow { position: absolute; right: 6px; top: 9px; width: 8px; height: 5px; }

.style-bar { gap: 2px; }
.auto { width: 72px; height: 23px; display: flex; align-items: center; justify-content: center; gap: 5px; border: 1px solid #707070; border-radius: 3px; background: linear-gradient(#f3f3f3, #d2d2d2); }
.auto svg { width: 16px; height: 16px; }
.sq { width: 20px; height: 22px; display: grid; place-items: center; border: 1px solid #808080; border-radius: 3px; background: linear-gradient(#f6f6f6, #dadada); }
.sq svg { width: 17px; height: 16px; }
.line { background: #000; box-shadow: inset 0 0 0 1px #ddd; }
.face { background: #ccc; box-shadow: inset 0 0 0 1px #ddd; }
.spin { display: flex; height: 24px; background: #fff; border: 1px solid #e2e2e2; }
.spin input { min-width: 0; flex: 1; padding-left: 3px; }
.spin > div { width: 13px; display: flex; flex-direction: column; }
.spin button { flex: 1; display: grid; place-items: center; border: 1px solid #c4c4c4; background: #f2f2f2; }
.spin button svg { width: 6px; height: 4px; fill: #555; }
.w1 { width: 42px; }
.w2 { width: 54px; margin-right: 1px; }
.snaps { gap: 2px; }
.snap { width: 24px; height: 24px; display: grid; place-items: center; border: 1px solid #b6b6b6; border-radius: 3px; background: #f8f8f8; }
.snap svg { width: 18px; height: 18px; }
.snap.on { border-color: #606060; background: linear-gradient(#e0e0e0, #f0f0f0); }
.snap.lock { background: #cfe3dc; }

.main { flex: 1; min-height: 0; display: flex; }
.dock { width: 464px; margin-right: 6px; flex: none; display: flex; flex-direction: column; }
.docktitle { height: 18px; margin: 1px -2px 2px 0; display: flex; align-items: center; gap: 6px; padding: 1px 3px 0 1px; background: #dadada; border: 1px solid #cdcdcd; border-left: 0; }
.docktitle, .tabs, .mdi { font-family: Roboto, "Noto Sans", sans-serif; }
.docktitle span { flex: 1; }
.docktitle svg { width: 10px; height: 10px; }
.tabs { height: 21px; display: flex; align-items: flex-end; }
.tab { height: 18px; width: 46px; border: 1px solid #888; border-bottom: 0; background: linear-gradient(#f4f4f4, #d8d8d8); }
.tab.active { width: 54px; height: 21px; padding-top: 2px; background: #fff; }
.pane { flex: 1; min-height: 0; display: flex; flex-direction: column; border: 1px solid #888; padding: 1px 1px 2px; background: #fff; }
.tree { height: 257px; flex: none; border: 1px solid #808080; }
.treehead { height: 21px; display: flex; border-bottom: 1px solid #dcdcdc; background: linear-gradient(#fff 50%, #f3f3f4); }
.treehead span { width: 168px; padding-left: 4px; line-height: 22px; border-right: 1px solid #dcdcdc; }
.tree ul { list-style: none; margin: 2px 0 0; padding: 0; }
.tree li { height: 18px; display: flex; align-items: center; padding-left: 8px; }
.tree li.root { padding-left: 3px; font-size: 12px; }
.tree li.sub { padding-left: 28px; }
.tree .tw { width: 8px; height: 10px; margin-right: 8px; }
.tree .ic { width: 14px; height: 14px; margin-right: 7px; }
.tree .sub .tw { margin-right: 4px; }
.tree .sub > .ic { margin-left: 4px; }
.tree li.bold { font-weight: bold; }
.dim-row { color: #8a8a8a; }
.sel { display: flex; align-items: center; height: 18px; width: 128px; padding-left: 3px; border: 1px solid #dedede; border-radius: 3px; background: linear-gradient(#fafafa, #ececec); }
.props { flex: 1; min-height: 0; margin: 5px 2px 0 0; border: 1px solid #808080; padding: 1px 2px 2px 1px; }
.propframe { height: 100%; border: 1px solid #808080; }
table { width: 100%; border-collapse: collapse; table-layout: fixed; }
.c1 { width: 20px; }
.c2 { width: 80px; }
th { height: 23px; padding: 0 4px; text-align: left; font-weight: normal; border-bottom: 1px solid #ccc; background: linear-gradient(#fff 50%, #f3f3f4); }
th:last-child { border-left: 1px solid #e0e0e0; }
td { height: 20px; padding: 0 3px; border-bottom: 1px solid #dcdcdc; }
td:last-child { border-left: 1px solid #dcdcdc; }
td.g { padding: 0 0 0 8px; border-bottom: 0; }
.g .tw { width: 8px; height: 10px; }
.alt td { background: #f5f5f5; }
.group td { background: #a0a0a0; color: #fff; font-weight: bold; border-left: 0; }
.btabs { height: 16px; flex: none; display: flex; }
.btab { position: relative; width: 47px; height: 16px; line-height: 14px; }
.btab svg { position: absolute; inset: 0; width: 100%; height: 100%; }
.btab span { position: relative; }

.work { flex: 1; min-width: 0; display: flex; flex-direction: column; }
.view { flex: 1; min-height: 0; position: relative; background: linear-gradient(#343466, #9797ad); }
.model { width: 100%; height: 100%; }
.axes { position: absolute; right: 0; bottom: 18px; width: 32px; height: 38px; font: 9px "Liberation Sans", sans-serif; }
.mdi { height: 24px; flex: none; display: flex; align-items: flex-start; padding-left: 2px; }
.doc { height: 22px; display: flex; align-items: center; gap: 4px; padding: 0 11px 0 10px; margin-right: 1px; border: 1px solid #999; border-top: 0; background: linear-gradient(#d9d9d9, #f2f2f2); }
.doc.cur { height: 24px; padding: 0 13px; margin: 0; background: #fff; }
.cl { width: 14px; height: 14px; border-radius: 3px; background: #c6c6c6; border: 1px solid #a9a9a9; }
.cur .cl { background: #d56a50; border-color: #b1452e; }
.status { height: 28px; flex: none; display: flex; align-items: center; justify-content: space-between; padding: 2px 19px 0 123px; border-bottom: 2px solid #454a58; }
.status i { width: 1px; height: 100%; background: #d4d4d4; }

.mark { position: fixed; left: 50%; top: 50%; translate: -50% -50%; white-space: nowrap; pointer-events: none; font: 51px/60px "Liberation Serif", serif; color: #d8d8ea; text-shadow: 1px 1px 1px #333; }
.han { font: 55px/60px "Noto Sans CJK SC", sans-serif; font-weight: 300; }
```
